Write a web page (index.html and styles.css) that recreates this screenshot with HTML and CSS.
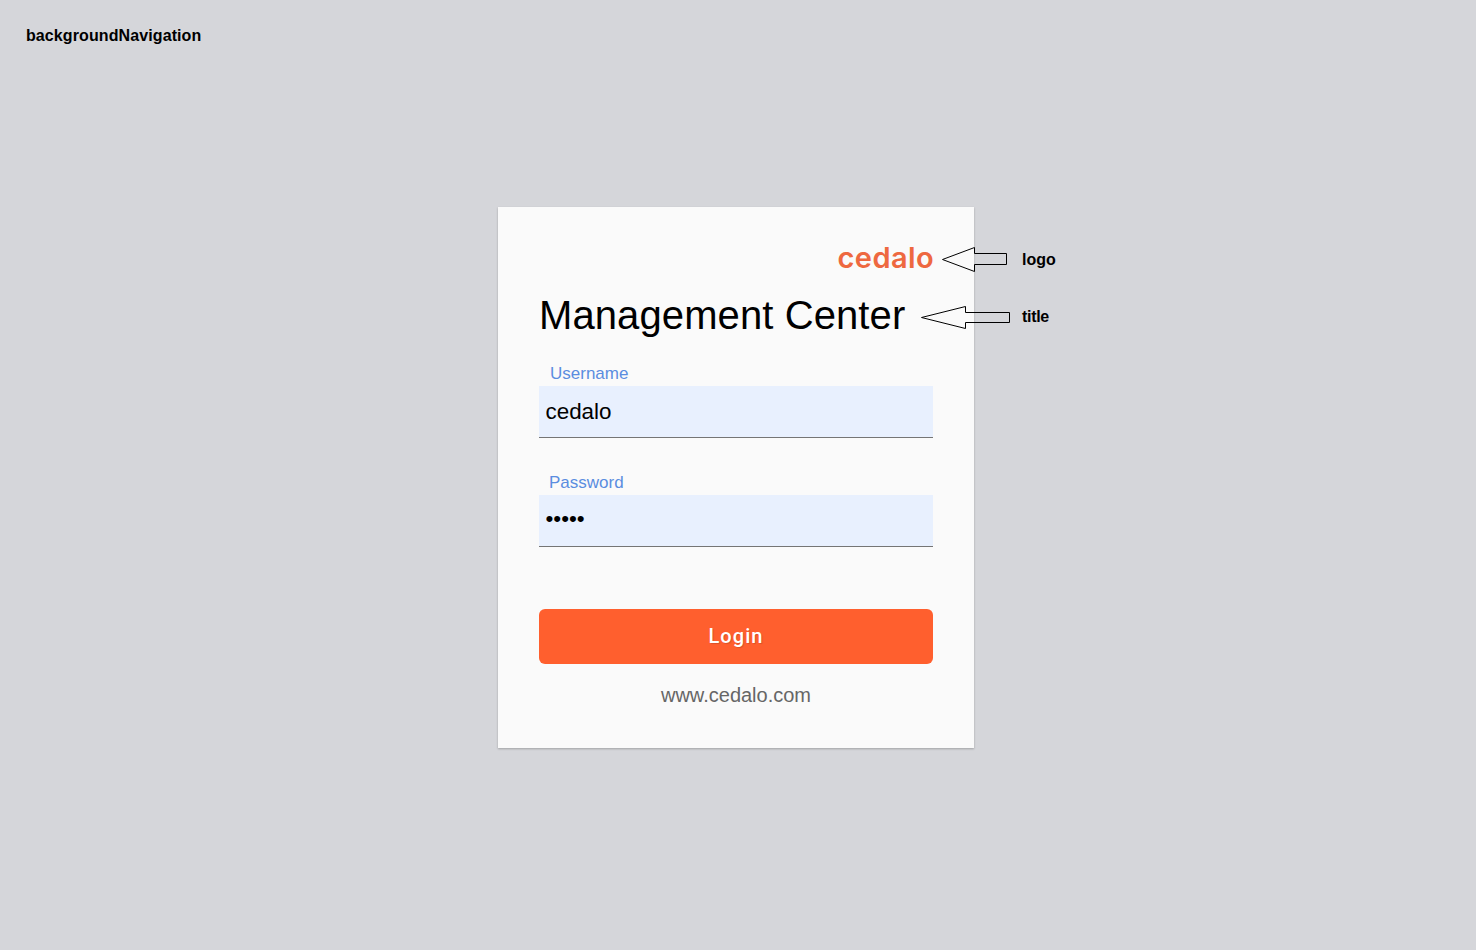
FILE: index.html
```html
<!DOCTYPE html>

<html>
	<head>
		<meta charset="utf-8">
		<title>Management Center</title>
		<link rel="stylesheet" href="styles.css">
	</head>

	<body>
		<div class="navNote">backgroundNavigation</div>
		<div class="card">
			<div class="logo">cedalo</div>
			<h1 class="title">Management Center</h1>
			<form class="loginForm">
				<label class="field">
					<span class="fieldLabel">Username</span>
					<input class="fieldInput" type="text" value="cedalo">
				</label>
				<label class="field">
					<span class="fieldLabel passwordLabel">Password</span>
					<input class="fieldInput passwordInput" type="password" value="cedal">
				</label>
				<button class="loginButton" type="button">Login</button>
			</form>
			<div class="siteLink">www.cedalo.com</div>

			<!-- callouts on top of the card -->
			<svg class="arrows" width="120" height="90" viewBox="0 0 120 90">
				<polygon class="arrow" points="1.5,13.5 33.5,1.5 33.5,7.5 65.5,7.5 65.5,18.5 33.5,18.5 33.5,25.5"/>
				<polygon class="arrow" points="-19.5,71.5 24.5,60.5 24.5,66.5 68.5,66.5 68.5,76.5 24.5,76.5 24.5,82.5"/>
			</svg>
			<span class="note logoNote">logo</span>
			<span class="note titleNote">title</span>
		</div>
	</body>
</html>
```

FILE: styles.css
```css
body {
	margin: 0;
	height: 950px;
	overflow: hidden;
	background-color: #d5d6da;
	font-family: "Liberation Sans", Arial, sans-serif;
	color: #000000;
}

.navNote {
	padding: 27px 0 0 26px;
	height: 180px;
	font-size: 16px;
	line-height: 18px;
	font-weight: bold;
	letter-spacing: 0.1px;
	color: #000000;
}

.card {
	position: relative;
	box-sizing: border-box;
	width: 476px;
	height: 541px;
	margin-left: 498px;
	padding: 0 41px;
	background-color: #fafafa;
	box-shadow: 0 1px 2px rgba(0, 0, 0, 0.25);
}

.logo {
	padding-top: 32px;
	height: 38px;
	margin-right: -1px;
	font-family: Inter, "Noto Sans", sans-serif;
	font-size: 29px;
	line-height: 37px;
	font-weight: 600;
	letter-spacing: 0.4px;
	text-align: right;
	color: #ee6840;
}

.title {
	margin: 13px 0 0 0;
	font-size: 40px;
	line-height: 50px;
	font-weight: normal;
	letter-spacing: 0.1px;
}

.loginForm {
	margin-top: 24px;
}

.field {
	display: block;
	margin-bottom: 35px;
}

.fieldLabel {
	display: block;
	padding-left: 11px;
	height: 22px;
	font-size: 17px;
	line-height: 20px;
	color: #5a8de0;
}

.passwordLabel {
	padding-left: 10px;
}

.fieldInput {
	display: block;
	box-sizing: border-box;
	width: 100%;
	height: 52px;
	padding: 0 7px 0 6.5px;
	border: 0;
	border-bottom: 1px solid #757575;
	border-radius: 0;
	outline: none;
	background-color: #e8f0fe;
	font-family: "Liberation Sans", Arial, sans-serif;
	font-size: 22.4px;
	color: #000000;
}

.passwordInput {
	padding-bottom: 4px;
}

.loginButton {
	display: block;
	width: 100%;
	height: 55px;
	margin-top: 62px;
	padding: 0 0 2px 0;
	border: 0;
	border-radius: 6px;
	background-color: #ff5f2e;
	font-family: Roboto, sans-serif;
	font-size: 20px;
	font-weight: 500;
	letter-spacing: 1.1px;
	color: #ffffff;
	text-shadow: 1px 1px 1px rgba(0, 0, 0, 0.15);
	cursor: pointer;
}

.siteLink {
	margin-top: 19px;
	font-size: 20px;
	line-height: 24px;
	text-align: center;
	color: #666666;
}

.arrows {
	position: absolute;
	left: 443px;
	top: 39px;
	overflow: visible;
}

.arrow {
	fill: none;
	stroke: #000000;
	stroke-width: 1;
}

.note {
	position: absolute;
	left: 524px;
	font-size: 16px;
	line-height: 18px;
	font-weight: bold;
}

.logoNote {
	top: 44px;
}

.titleNote {
	top: 101px;
	letter-spacing: -0.3px;
}
```
